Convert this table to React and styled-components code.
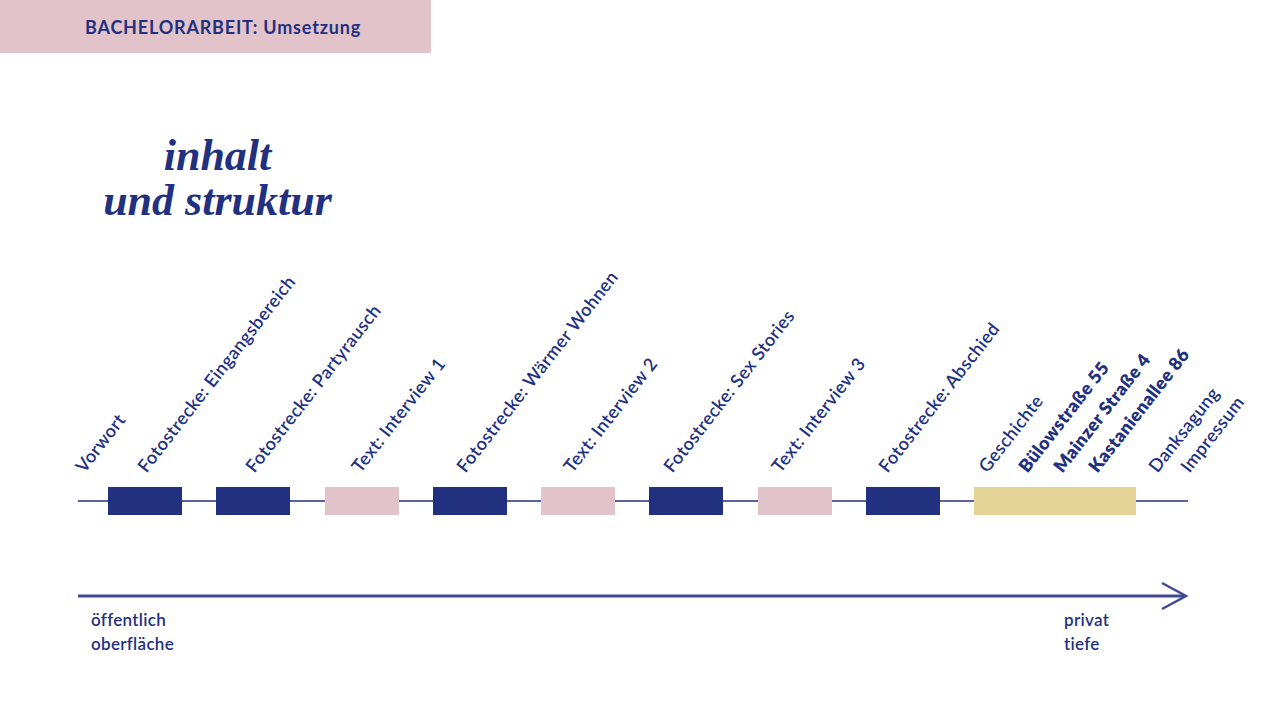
import React from 'react';
import styled, { createGlobalStyle } from 'styled-components';

const NAVY = '#22317f';
const PINK = '#e1c3c9';
const SAND = '#e4d497';
const LINE = '#5a62a2';

const GlobalStyle = createGlobalStyle`
  html, body {
    margin: 0;
    padding: 0;
    background: #fff;
  }
  body {
    font-family: 'Lato', 'Noto Sans', sans-serif;
    color: ${NAVY};
  }
`;

const Page = styled.div`
  width: 1280px;
  height: 720px;
  overflow: hidden;
  display: flex;
  flex-direction: column;
`;

const Header = styled.header`
  width: 431px;
  height: 53px;
  background: ${PINK};
  display: flex;
  align-items: center;
  padding-left: 85px;
  box-sizing: border-box;
  font-size: 18px;
  font-weight: 700;
  letter-spacing: 0.045em;
`;

const Title = styled.h1`
  width: 435px;
  margin: 80px 0 0;
  text-align: center;
  font-family: 'Liberation Serif', 'DejaVu Serif', serif;
  font-style: italic;
  font-weight: 700;
  font-size: 44px;
  line-height: 45px;
`;

const Track = styled.div`
  position: relative;
  width: 1110px;
  height: 28px;
  margin: 264px 0 0 78px;
  padding-left: 30px;
  box-sizing: border-box;
  display: flex;
  gap: 34.25px;

  &::before {
    content: '';
    position: absolute;
    left: 0;
    right: 0;
    top: 13px;
    height: 2px;
    background: ${LINE};
  }
`;

const Segment = styled.div`
  position: relative;
  width: ${(p) => p.$width}px;
  height: 28px;
  flex: none;
  background: ${(p) => p.$color};
`;

const Label = styled.span`
  position: absolute;
  bottom: calc(100% + 12px);
  left: ${(p) => p.$x + 11}px;
  font-size: 18px;
  line-height: 18px;
  font-weight: ${(p) => (p.$bold ? 800 : 600)};
  letter-spacing: 0.4px;
  white-space: nowrap;
  transform: rotate(-52deg);
  transform-origin: 0 100%;
`;

const Arrow = styled.svg`
  display: block;
  margin: 69px 0 0 78px;
  overflow: visible;
`;

const Legend = styled.div`
  display: flex;
  margin: 0 0 0 91px;
`;

const LegendText = styled.div`
  width: ${(p) => p.$width || 'auto'};
  font-size: 17px;
  line-height: 24px;
  font-weight: 600;
  letter-spacing: 0.3px;
`;

const segments = [
  { color: NAVY, width: 74, labels: [{ x: -33, text: 'Vorwort' }, { x: 29, text: 'Fotostrecke: Eingangsbereich' }] },
  { color: NAVY, width: 74, labels: [{ x: 29, text: 'Fotostrecke: Partyrausch' }] },
  { color: PINK, width: 74, labels: [{ x: 26, text: 'Text: Interview 1' }] },
  { color: NAVY, width: 74, labels: [{ x: 23, text: 'Fotostrecke: Wärmer Wohnen' }] },
  { color: PINK, width: 74, labels: [{ x: 22, text: 'Text: Interview 2' }] },
  { color: NAVY, width: 74, labels: [{ x: 14, text: 'Fotostrecke: Sex Stories' }] },
  { color: PINK, width: 74, labels: [{ x: 13, text: 'Text: Interview 3' }] },
  { color: NAVY, width: 74, labels: [{ x: 12, text: 'Fotostrecke: Abschied' }] },
  {
    color: SAND,
    width: 162,
    labels: [
      { x: 4, text: 'Geschichte' },
      { x: 44, text: 'Bülowstraße 55', bold: true },
      { x: 79, text: 'Mainzer Straße 4', bold: true },
      { x: 114, text: 'Kastanienallee 86', bold: true },
      { x: 174, text: 'Danksagung' },
      { x: 206, text: 'Impressum' },
    ],
  },
];

const App = () => {
  return (
    <Page>
      <GlobalStyle />
      <Header>BACHELORARBEIT: Umsetzung</Header>
      <Title>
        inhalt
        <br />
        und struktur
      </Title>

      <Track>
        {segments.map((seg, i) => (
          <Segment key={i} $color={seg.color} $width={seg.width}>
            {seg.labels.map((l) => (
              <Label key={l.text} $x={l.x} $bold={l.bold}>
                {l.text}
              </Label>
            ))}
          </Segment>
        ))}
      </Track>

      <Arrow width="1110" height="24" viewBox="0 0 1110 24">
        <line x1="0" y1="12" x2="1107" y2="12" stroke="#3f4a92" strokeWidth="3" />
        <polyline
          points="1084,-1 1108,12 1084,25"
          fill="none"
          stroke="#3f4a92"
          strokeWidth="2.5"
        />
      </Arrow>

      <Legend>
        <LegendText $width="973px">
          öffentlich
          <br />
          oberfläche
        </LegendText>
        <LegendText>
          privat
          <br />
          tiefe
        </LegendText>
      </Legend>
    </Page>
  );
};

export default App;
